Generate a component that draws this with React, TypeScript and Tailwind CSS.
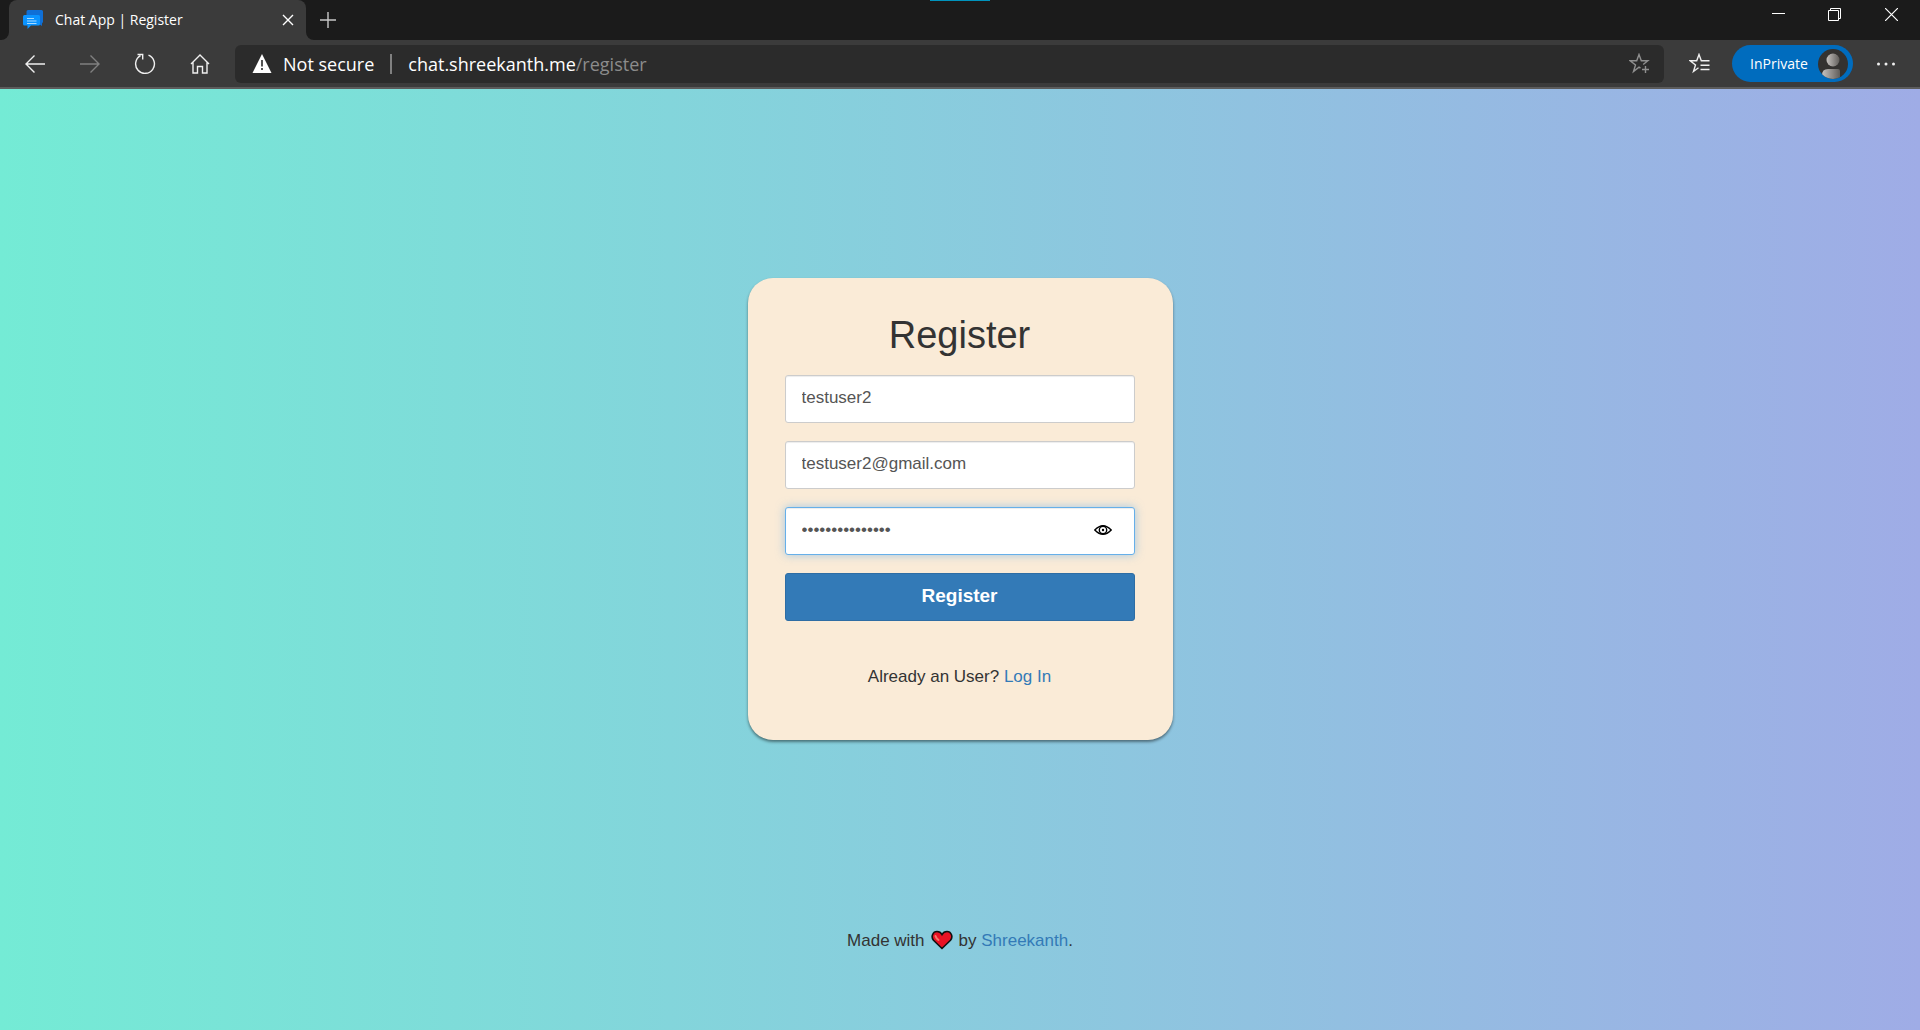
import React, { useState } from "react";

const icon = {
  fill: "none",
  stroke: "currentColor",
  strokeWidth: 1.4,
  "aria-hidden": true,
} as const;

function ChatLogo() {
  return (
    <svg width="20" height="20" viewBox="0 0 20 20" aria-hidden="true">
      <path d="M5 0h13.5A1.5 1.5 0 0 1 20 1.500V12l-1 1.500V16l-3-2H5L3.500 12V1.500A1.500 1.500 0 0 1 5 0Z" fill="#0f6fd6" />
      <path d="M1.500 5h14A1.500 1.500 0 0 1 17 6.500V14a1.500 1.500 0 0 1-1.500 1.500H8L4.500 19v-3.500h-3A1.500 1.500 0 0 1 0 14V6.500A1.500 1.500 0 0 1 1.500 5Z" fill="#0a93ff" />
      <path d="M4 8.500h7M4 11h9.500M4 13.500h9.500" stroke="#a8dbff" strokeWidth="1" />
    </svg>
  );
}

function TabStrip() {
  return (
    <div className="flex h-10 justify-between bg-[#1b1b1b] text-white">
      <div className="flex min-w-0 flex-1">
        <div className="w-[9px] bg-[#3b3b3b]">
          <div className="h-full rounded-br-lg bg-[#1b1b1b]" />
        </div>
        <div className="flex w-[297px] items-center rounded-t-lg bg-[#3b3b3b] pr-2 pl-[14px]">
          <ChatLogo />
          <span className="ml-3 flex-1 truncate text-sm">Chat App | Register</span>
          <button type="button" aria-label="Close tab" className="flex size-5 items-center justify-center">
            <svg {...icon} width="12" height="12" viewBox="0 0 12 12"><path d="m1 1 10 10M11 1 1 11" /></svg>
          </button>
        </div>
        <div className="w-[9px] bg-[#3b3b3b]">
          <div className="h-full rounded-bl-lg bg-[#1b1b1b]" />
        </div>
        <button type="button" aria-label="New tab" className="flex w-[26px] items-center justify-center text-[#c8c8c8]">
          <svg {...icon} width="16" height="16" viewBox="0 0 16 16"><path d="M8 0v16M0 8h16" /></svg>
        </button>
      </div>
      <div className="h-px w-[60px] bg-[#0093bd]" />
      <div className="flex h-[29px] flex-1 justify-end">
        <button type="button" aria-label="Minimize" className="flex w-14 items-center justify-center">
          <svg {...icon} strokeWidth="1" width="13" height="13" viewBox="0 0 13 13"><path d="M0 5.500h13" /></svg>
        </button>
        <button type="button" aria-label="Restore" className="flex w-14 items-center justify-center">
          <svg {...icon} strokeWidth="1" width="13" height="13" viewBox="0 0 13 13"><path d="M.5 2.500h10v10H.5zM2.500 2.500v-2h10v10h-2" /></svg>
        </button>
        <button type="button" aria-label="Close window" className="flex w-[58px] items-center justify-center">
          <svg {...icon} strokeWidth="1.200" width="13" height="13" viewBox="0 0 13 13"><path d="m0 0 13 13M13 0 0 13" /></svg>
        </button>
      </div>
    </div>
  );
}

function Toolbar() {
  return (
    <div className="flex h-[49px] items-center border-b-2 border-[#5c5c5c] bg-[#3b3b3b] pr-6 pl-[7px] text-[#f0f0f0]">
      <button type="button" aria-label="Back" className="flex h-9 w-[55px] items-center justify-center">
        <svg {...icon} width="20" height="18" viewBox="0 0 20 18"><path d="M20 9H1M9.500.5 1 9l8.500 8.500" /></svg>
      </button>
      <button type="button" aria-label="Forward" disabled className="flex h-9 w-[55px] items-center justify-center text-[#808080]">
        <svg {...icon} width="20" height="18" viewBox="0 0 20 18"><path d="M0 9h19M10.500.5 19 9l-8.500 8.500" /></svg>
      </button>
      <button type="button" aria-label="Reload" className="flex h-9 w-[55px] items-center justify-center">
        <svg {...icon} width="22" height="22" viewBox="0 0 22 22"><path d="M14.500 2.200A9.400 9.400 0 1 1 6.500 2.700M3.500 1.500h5.200v5" /></svg>
      </button>
      <button type="button" aria-label="Home" className="flex h-9 w-[55px] items-center justify-center">
        <svg {...icon} width="20" height="20" viewBox="0 0 20 20"><path d="m1 10 9-9 9 9M3 8.500V19h4.500v-6.500h5V19H17V8.500" /></svg>
      </button>
      <div className="ml-2 flex h-[38px] min-w-0 flex-1 items-center rounded-md bg-[#2b2b2b] pr-3 pl-[17px] text-lg">
        <svg width="20" height="19" viewBox="0 0 20 19" aria-hidden="true">
          <path d="M10 0 19.500 19H.5Z" fill="#fff" />
          <path d="M10 6v6.500M10 14v2" stroke="#2b2b2b" strokeWidth="1.600" />
        </svg>
        <span className="ml-[11px] whitespace-nowrap text-white">Not secure</span>
        <span className="mx-4 h-5 w-0.5 bg-[#808080]" />
        <span className="flex-1 truncate text-white">
          chat.shreekanth.me<span className="text-[#8c8c8c]">/register</span>
        </span>
        <button type="button" aria-label="Add to favorites" className="flex size-6 items-center justify-center text-[#8f8f8f]">
          <svg {...icon} width="22" height="22" viewBox="0 0 22 22">
            <path d="M11.500 15.200 10 14.200 4.500 18.500 6.500 12 1.200 7.800h6.500L10 1.500l2.300 6.300h6.500l-4.600 3.700M16.500 13v7M13 16.500h7" />
          </svg>
        </button>
      </div>
      <button type="button" aria-label="Favorites" className="ml-6 flex size-6 items-center justify-center">
        <svg {...icon} width="22" height="22" viewBox="0 0 22 22">
          <path d="M9.500 14.800 4.500 18.500 6.500 12 1.200 7.800h6.500L10 1.500l2.300 6.300h8.200M11.500 12.200h9M11.500 16.500h9" />
        </svg>
      </button>
      <button type="button" className="ml-5 flex h-[37px] w-[121px] items-center justify-between rounded-full bg-[#006cbe] pr-[5px] pl-[18px] text-sm text-white">
        InPrivate
        <svg width="30" height="30" viewBox="0 0 30 30" aria-hidden="true">
          <defs>
            <linearGradient id="person">
              <stop offset="0" stopColor="#c6c2bf" />
              <stop offset="1" stopColor="#605d5a" />
            </linearGradient>
            <clipPath id="avatar"><circle cx="15" cy="15" r="15" /></clipPath>
          </defs>
          <g clipPath="url(#avatar)">
            <path d="M0 0h30v30H0z" fill="#343230" />
            <circle cx="15" cy="11" r="6.500" fill="url(#person)" />
            <path d="M4 30v-4q0-6 6-6h10q2 0 2 2v8Z" fill="url(#person)" />
          </g>
        </svg>
      </button>
      <button type="button" aria-label="Settings and more" className="ml-[23px] flex h-6 w-5 items-center justify-center">
        <svg width="20" height="4" viewBox="0 0 20 4" fill="currentColor" aria-hidden="true">
          <circle cx="2.500" cy="2" r="1.500" /><circle cx="10" cy="2" r="1.500" /><circle cx="17.500" cy="2" r="1.500" />
        </svg>
      </button>
    </div>
  );
}

const field =
  "h-12 w-full rounded-[3px] border bg-white px-4 pb-0.5 text-[17px] text-[#555] outline-none";

function RegisterCard() {
  const [visible, setVisible] = useState(false);
  return (
    <main className="w-full max-w-[425px] rounded-[25px] bg-[#faebd7] pt-[34px] pr-[38px] pb-[51px] pl-[37px] shadow-[0_2px_3px_rgba(0,0,0,0.45)]">
      <h1 className="text-center text-[38px] leading-[46px]">Register</h1>
      <form className="mt-[17px] flex flex-col gap-[18px]" onSubmit={(e) => e.preventDefault()}>
        <input aria-label="Username" type="text" defaultValue="testuser2" className={`${field} border-[#ccc] shadow-[inset_0_1px_1px_rgba(0,0,0,0.075)]`} />
        <input aria-label="Email" type="email" defaultValue="testuser2@gmail.com" className={`${field} border-[#ccc] shadow-[inset_0_1px_1px_rgba(0,0,0,0.075)]`} />
        <div className="relative">
          <input
            aria-label="Password"
            type={visible ? "text" : "password"}
            defaultValue="testpassword123"
            className={`${field} border-[#66afe9] shadow-[inset_0_1px_1px_rgba(0,0,0,0.075),0_0_10px_rgba(102,175,233,0.6)]`}
          />
          <button
            type="button"
            aria-label="Show password"
            onClick={() => setVisible(!visible)}
            className="absolute inset-y-0 right-5 flex w-6 items-center justify-center pb-0.5 text-black"
          >
            <svg {...icon} width="18" height="10" viewBox="0 0 18 10">
              <path d="M.8 5Q9-3.600 17.200 5 9 13.600.8 5Z" />
              <circle cx="9" cy="5" r="3.700" />
              <circle cx="9" cy="5" r="1.200" fill="currentColor" stroke="none" />
            </svg>
          </button>
        </div>
        <button type="submit" className="h-12 rounded-[3px] border border-[#2e6da4] bg-[#337ab7] pb-0.5 text-[19px] font-bold text-white">
          Register
        </button>
      </form>
      <p className="mt-11 text-center text-[17px] leading-6">
        Already an User? <a href="#login" className="text-[#337ab7]">Log In</a>
      </p>
    </main>
  );
}

function Heart() {
  return (
    <svg role="img" aria-label="love" width="22" height="20" viewBox="0 0 22 20" className="mx-1.5 inline-block align-[-4px]">
      <path d="M11 18.500 2.500 10.300C-.5 6.500 2 1.500 6 1.500c2.500 0 4 1.200 5 3 1-1.800 2.500-3 5-3 4 0 6.500 5 3.500 8.800Z" fill="#e81224" stroke="#111" strokeWidth="1.600" />
      <path d="M4.500 6q.5 2 3 4" fill="none" stroke="#f4776c" strokeWidth="2" strokeLinecap="round" />
    </svg>
  );
}

export default function App() {
  return (
    <div className="flex min-h-screen flex-col">
      <header className="font-['Open_Sans','Noto_Sans',sans-serif]">
        <TabStrip />
        <Toolbar />
      </header>
      <div className="flex flex-1 flex-col items-center bg-[linear-gradient(90deg,#74ebd5_0%,#9face6_100%)] pt-[189px] pb-[77px] font-['Liberation_Sans',Arial,sans-serif] text-[#333]">
        <RegisterCard />
        <footer className="mt-auto text-[17px] leading-6">
          Made with
          <Heart />
          by <a href="#shreekanth" className="text-[#337ab7]">Shreekanth</a>.
        </footer>
      </div>
    </div>
  );
}
